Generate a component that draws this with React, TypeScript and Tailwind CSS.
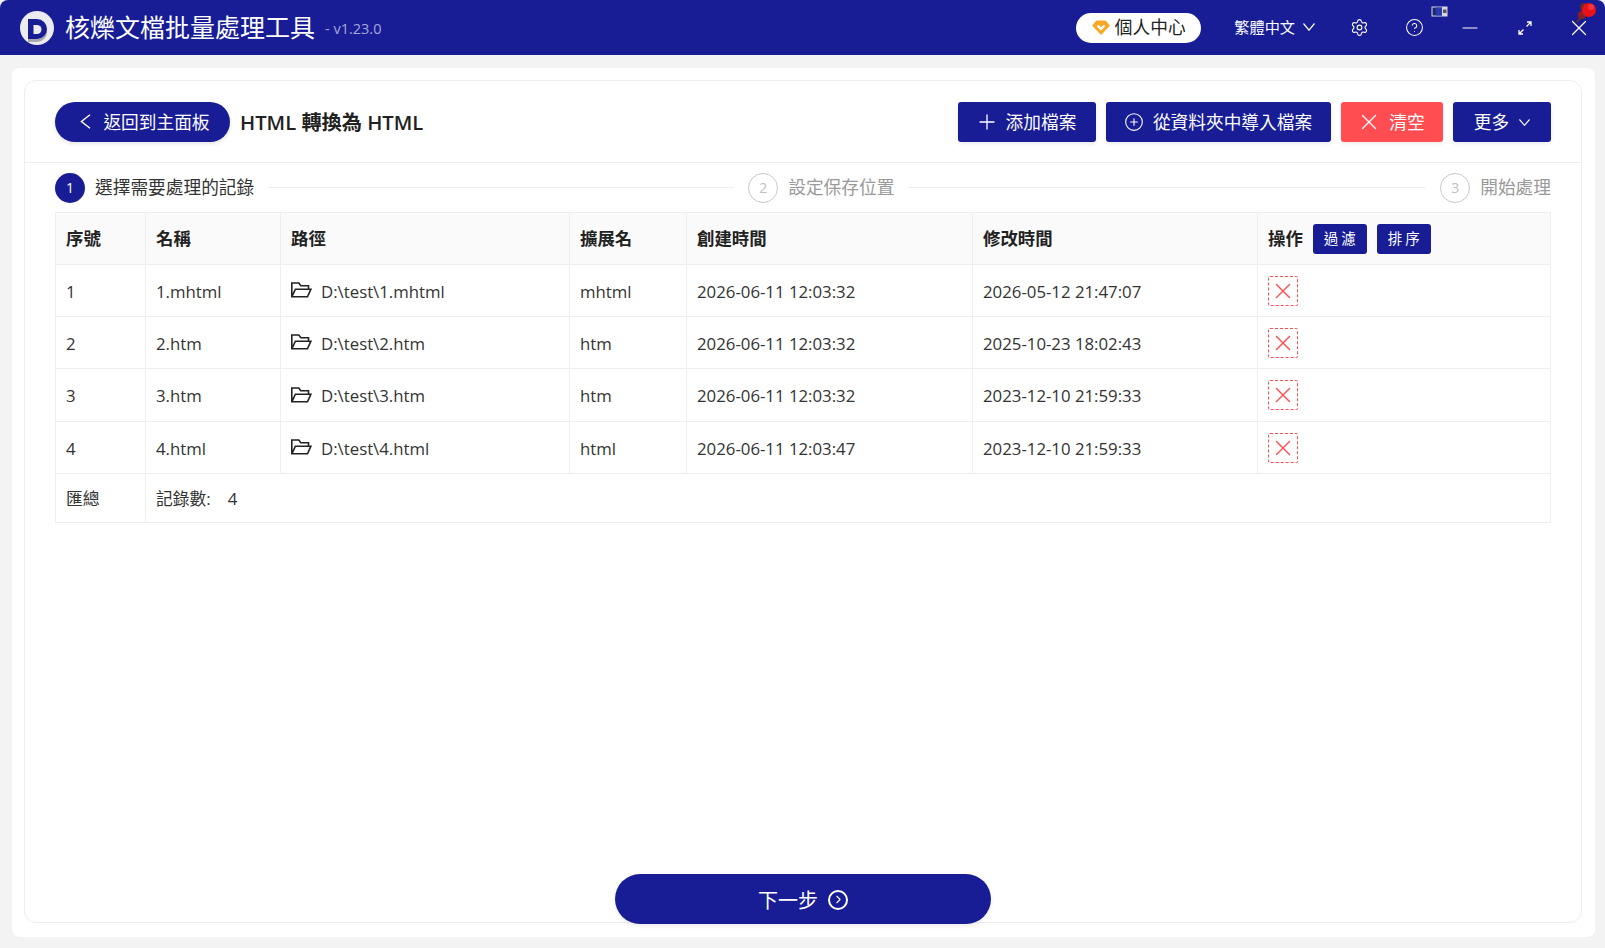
import React from 'react';
import { ChevronRight, CirclePlus, CircleHelp, Minus, Plus, Settings, X } from 'lucide-react';

const font = "font-['Open_Sans','Noto_Sans_CJK_TC',sans-serif]";

const rows = [
  { id: '1', name: '1.mhtml', path: 'D:\\test\\1.mhtml', ext: 'mhtml', created: '2026-06-11 12:03:32', modified: '2026-05-12 21:47:07', h: 'h-[52px]' },
  { id: '2', name: '2.htm', path: 'D:\\test\\2.htm', ext: 'htm', created: '2026-06-11 12:03:32', modified: '2025-10-23 18:02:43', h: 'h-[52px]' },
  { id: '3', name: '3.htm', path: 'D:\\test\\3.htm', ext: 'htm', created: '2026-06-11 12:03:32', modified: '2023-12-10 21:59:33', h: 'h-[53px]' },
  { id: '4', name: '4.html', path: 'D:\\test\\4.html', ext: 'html', created: '2026-06-11 12:03:47', modified: '2023-12-10 21:59:33', h: 'h-[52px]' },
];

const Logo = () => (
  <svg width="36" height="36" viewBox="0 0 36 36">
    <circle cx="18" cy="18" r="17" fill="#ececf0" />
    <path d="M9 12h9a10 10 0 0 1 0 20H9z" fill="#a8a8b4" />
    <path d="M9 9h9a10 10 0 0 1 0 20H9z" fill="#181d96" />
    <path d="M14.5 15h3.5a4.5 4.5 0 0 1 0 9h-3.5z" fill="#ececf0" />
  </svg>
);

const Gem = () => (
  <svg width="18" height="15" viewBox="0 0 18 15">
    <path d="M5 0.5h8a1.5 1.5 0 0 1 1.2.6l3.2 3.8a1 1 0 0 1 0 1.3l-7.6 8a1 1 0 0 1-1.5 0l-7.6-8a1 1 0 0 1 0-1.3l3.2-3.8A1.5 1.5 0 0 1 5 0.5z" fill="#f9a825" />
    <path d="M5.5 5.5 9 9l3.5-3.5" fill="none" stroke="#fff" strokeWidth="2.2" />
  </svg>
);

const Expand = () => (
  <svg width="14" height="14" viewBox="0 0 14 14" fill="none" stroke="#fff" strokeWidth="1.3">
    <path d="M8.5 5.5 13 1M9 1h4v4M5.5 8.5 1 13M1 9v4h4" />
  </svg>
);

const Pin = () => (
  <svg width="24" height="24" viewBox="0 0 24 24" className="absolute right-[6px] top-[1px]">
    <path d="M2 21l6-7" stroke="#5a3030" strokeWidth="2" />
    <circle cx="7" cy="14" r="4" fill="#8c2020" />
    <circle cx="9" cy="6" r="4" fill="#6b2a2a" />
    <circle cx="14" cy="9" r="7" fill="#ea1119" />
    <circle cx="16" cy="6" r="3" fill="#f8343a" />
  </svg>
);

const Tray = () => (
  <svg width="17" height="11" viewBox="0 0 17 11" className="absolute left-[1431px] top-[6px]">
    <rect x="0.5" y="0.5" width="16" height="10" fill="#d8d8e4" />
    <rect x="1.5" y="1.5" width="9.5" height="8" fill="#1c2a70" />
    <rect x="5" y="1.5" width="6" height="8" fill="#2a3ab0" />
    <rect x="12" y="3.5" width="3.5" height="3.5" fill="#555" />
  </svg>
);

const Chev = ({ w, h }: { w: number; h: number }) => (
  <svg width={w} height={h} viewBox="0 0 12 7" preserveAspectRatio="none" fill="none" stroke="#fff" strokeWidth="1.2">
    <path d="M0.5 0.5 6 6.3l5.5-5.8" />
  </svg>
);

const FolderIcon = () => (
  <svg width="21" height="16" viewBox="0 0 21 16" fill="none" stroke="#222" strokeWidth="1.6" className="-mt-[3px] shrink-0">
    <path d="M0.8 14.8V1h7l2 2.8h7.7v3.4M0.8 14.8h15.7l3.4-7.6H4.4z" />
  </svg>
);

const TitleBar = () => (
  <div className="relative flex h-[55px] shrink-0 items-center rounded-t-lg bg-[#181d96] pl-[19px] text-white">
    <Logo />
    <span className="ml-[10px] text-[25px] leading-none">核爍文檔批量處理工具</span>
    <span className="ml-[10px] mt-[3px] text-[14.5px] text-[#a4a8d6]">- v1.23.0</span>
    <div className="ml-auto flex items-center">
      <div className="flex h-[30px] w-[125px] items-center justify-center gap-[5px] rounded-full bg-white text-[17.7px] text-[#222]">
        <Gem />
        個人中心
      </div>
      <div className="ml-[33px] flex items-center gap-[8px] text-[15.2px]">
        繁體中文
        <Chev w={12} h={8} />
      </div>
      <Settings size={19} strokeWidth={1.4} className="ml-[35px]" />
      <CircleHelp size={19} strokeWidth={1.3} className="ml-[36px]" />
      <Minus size={24} strokeWidth={1.1} className="ml-[34px]" />
      <span className="ml-[36px] flex"><Expand /></span>
      <X size={26} strokeWidth={1.1} className="ml-[34px] mr-[13px]" />
    </div>
    <Tray />
    <Pin />
  </div>
);

const ToolButton = ({ children, className }: { children: React.ReactNode; className: string }) => (
  <button className={`flex h-10 items-center justify-center gap-[10px] rounded-[3px] text-[17.7px] text-white shadow-[0_2px_4px_rgba(0,0,0,0.08)] ${className}`}>
    {children}
  </button>
);

const Step = ({ n, label, active }: { n: string; label: string; active?: boolean }) => (
  <div className="flex shrink-0 items-center gap-[10px]">
    <span className={active ? 'flex size-[30px] items-center justify-center rounded-full bg-[#181d96] text-[14px] text-white' : 'flex size-[30px] items-center justify-center rounded-full border border-[#c8c8c8] text-[14px] text-[#c0c0c0]'}>
      {n}
    </span>
    <span className={active ? 'text-[17.7px] text-[#333]' : 'text-[17.7px] text-[#999]'}>{label}</span>
  </div>
);

const th = 'border-r border-b border-[#eeeeee] px-[10px] text-left text-[17.4px] font-semibold text-[#222]';
const td = 'border-r border-b border-[#eeeeee] px-[10px] pt-[2px] text-[16.8px] font-normal text-[#333]';

const RecordTable = () => (
  <table className="w-full table-fixed border-collapse border border-[#eeeeee]">
    <colgroup>
      <col className="w-[90px]" />
      <col className="w-[135px]" />
      <col className="w-[289px]" />
      <col className="w-[117px]" />
      <col className="w-[286px]" />
      <col className="w-[285px]" />
      <col />
    </colgroup>
    <thead>
      <tr className="h-[52px] bg-[#fafafa]">
        <th className={th}>序號</th>
        <th className={th}>名稱</th>
        <th className={th}>路徑</th>
        <th className={th}>擴展名</th>
        <th className={th}>創建時間</th>
        <th className={th}>修改時間</th>
        <th className={th}>
          <div className="flex items-center">
            操作
            <button className="ml-[10px] h-[30px] w-[54px] rounded-[3px] bg-[#181d96] pl-[3px] text-[14.5px] font-normal tracking-[3px] text-white">過濾</button>
            <button className="ml-[10px] h-[30px] w-[54px] rounded-[3px] bg-[#181d96] pl-[3px] text-[14.5px] font-normal tracking-[3px] text-white">排序</button>
          </div>
        </th>
      </tr>
    </thead>
    <tbody>
      {rows.map((r) => (
        <tr key={r.id} className={r.h}>
          <td className={td}>{r.id}</td>
          <td className={td}>{r.name}</td>
          <td className={td}>
            <div className="flex items-center gap-[9px]">
              <FolderIcon />
              {r.path}
            </div>
          </td>
          <td className={td}>{r.ext}</td>
          <td className={td}>{r.created}</td>
          <td className={td}>{r.modified}</td>
          <td className="border-r border-b border-[#eeeeee] px-[10px]">
            <span className="flex size-[30px] items-center justify-center rounded-[2px] border border-dashed border-[#ff4d52]">
              <X size={26} strokeWidth={1.3} className="text-[#ff4d52]" />
            </span>
          </td>
        </tr>
      ))}
      <tr className="h-[49px]">
        <td className={td}>匯總</td>
        <td className={td} colSpan={6}>記錄數:<span className="ml-[17px]">4</span></td>
      </tr>
    </tbody>
  </table>
);

export default function App() {
  return (
    <div className={`flex h-screen flex-col overflow-hidden bg-[#f3f3f3] ${font}`}>
      <TitleBar />
      <div className="mb-[11px] ml-3 mr-[10px] mt-[13px] flex min-h-0 flex-1 rounded-lg bg-white pb-[14px] pl-3 pr-[13px] pt-3">
        <div className="flex min-w-0 flex-1 flex-col rounded-xl border border-[#eeeeee]">
          <div className="flex h-[82px] shrink-0 items-center border-b border-[#eeeeee] pl-[30px] pr-[30px]">
            <button className="flex h-10 w-[175px] items-center justify-center gap-[12px] rounded-full bg-[#181d96] pl-[5px] text-[17.7px] text-white shadow-[0_2px_4px_rgba(0,0,0,0.1)]">
              <svg width="11" height="15" viewBox="0 0 11 15" fill="none" stroke="#fff" strokeWidth="1.4">
                <path d="M10 0.7 1.4 7.5l8.6 6.8" />
              </svg>
              <span className="pt-[2px]">返回到主面板</span>
            </button>
            <span className="ml-[10px] pt-[2px] text-[20.2px] font-semibold text-[#222]">HTML 轉換為 HTML</span>
            <div className="ml-auto flex gap-[10px]">
              <ToolButton className="w-[138px] bg-[#181d96] pt-[2px]"><Plus size={24} strokeWidth={1.3} className="-mx-[3px] -mt-[2px]" />添加檔案</ToolButton>
              <ToolButton className="w-[225px] bg-[#181d96] pt-[2px]"><CirclePlus size={20} strokeWidth={1.3} className="-mx-px -mt-[2px]" />從資料夾中導入檔案</ToolButton>
              <ToolButton className="w-[102px] bg-[#ff4d52] pt-[2px]"><X size={26} strokeWidth={1.2} className="-mx-[3px] -mt-[2px]" />清空</ToolButton>
              <ToolButton className="w-[98px] bg-[#181d96] pt-[2px]">更多<Chev w={11} h={7} /></ToolButton>
            </div>
          </div>
          <div className="flex h-[49px] shrink-0 items-center gap-[14px] px-[30px]">
            <Step n="1" label="選擇需要處理的記錄" active />
            <div className="h-px w-[466px] bg-[#eeeeee]" />
            <Step n="2" label="設定保存位置" />
            <div className="h-px flex-1 bg-[#eeeeee]" />
            <Step n="3" label="開始處理" />
          </div>
          <div className="px-[30px]">
            <RecordTable />
          </div>
          <button className="mx-auto -mb-[2px] mt-auto flex h-[50px] w-[376px] items-center justify-center gap-[10px] rounded-full bg-[#181d96] text-[20px] text-white shadow-[0_2px_4px_rgba(0,0,0,0.08)]">
            <span className="pt-[3px]">下一步</span>
            <span className="mt-[1px] flex size-5 items-center justify-center rounded-full border-2 border-white">
              <ChevronRight size={13} strokeWidth={2} />
            </span>
          </button>
        </div>
      </div>
    </div>
  );
}
